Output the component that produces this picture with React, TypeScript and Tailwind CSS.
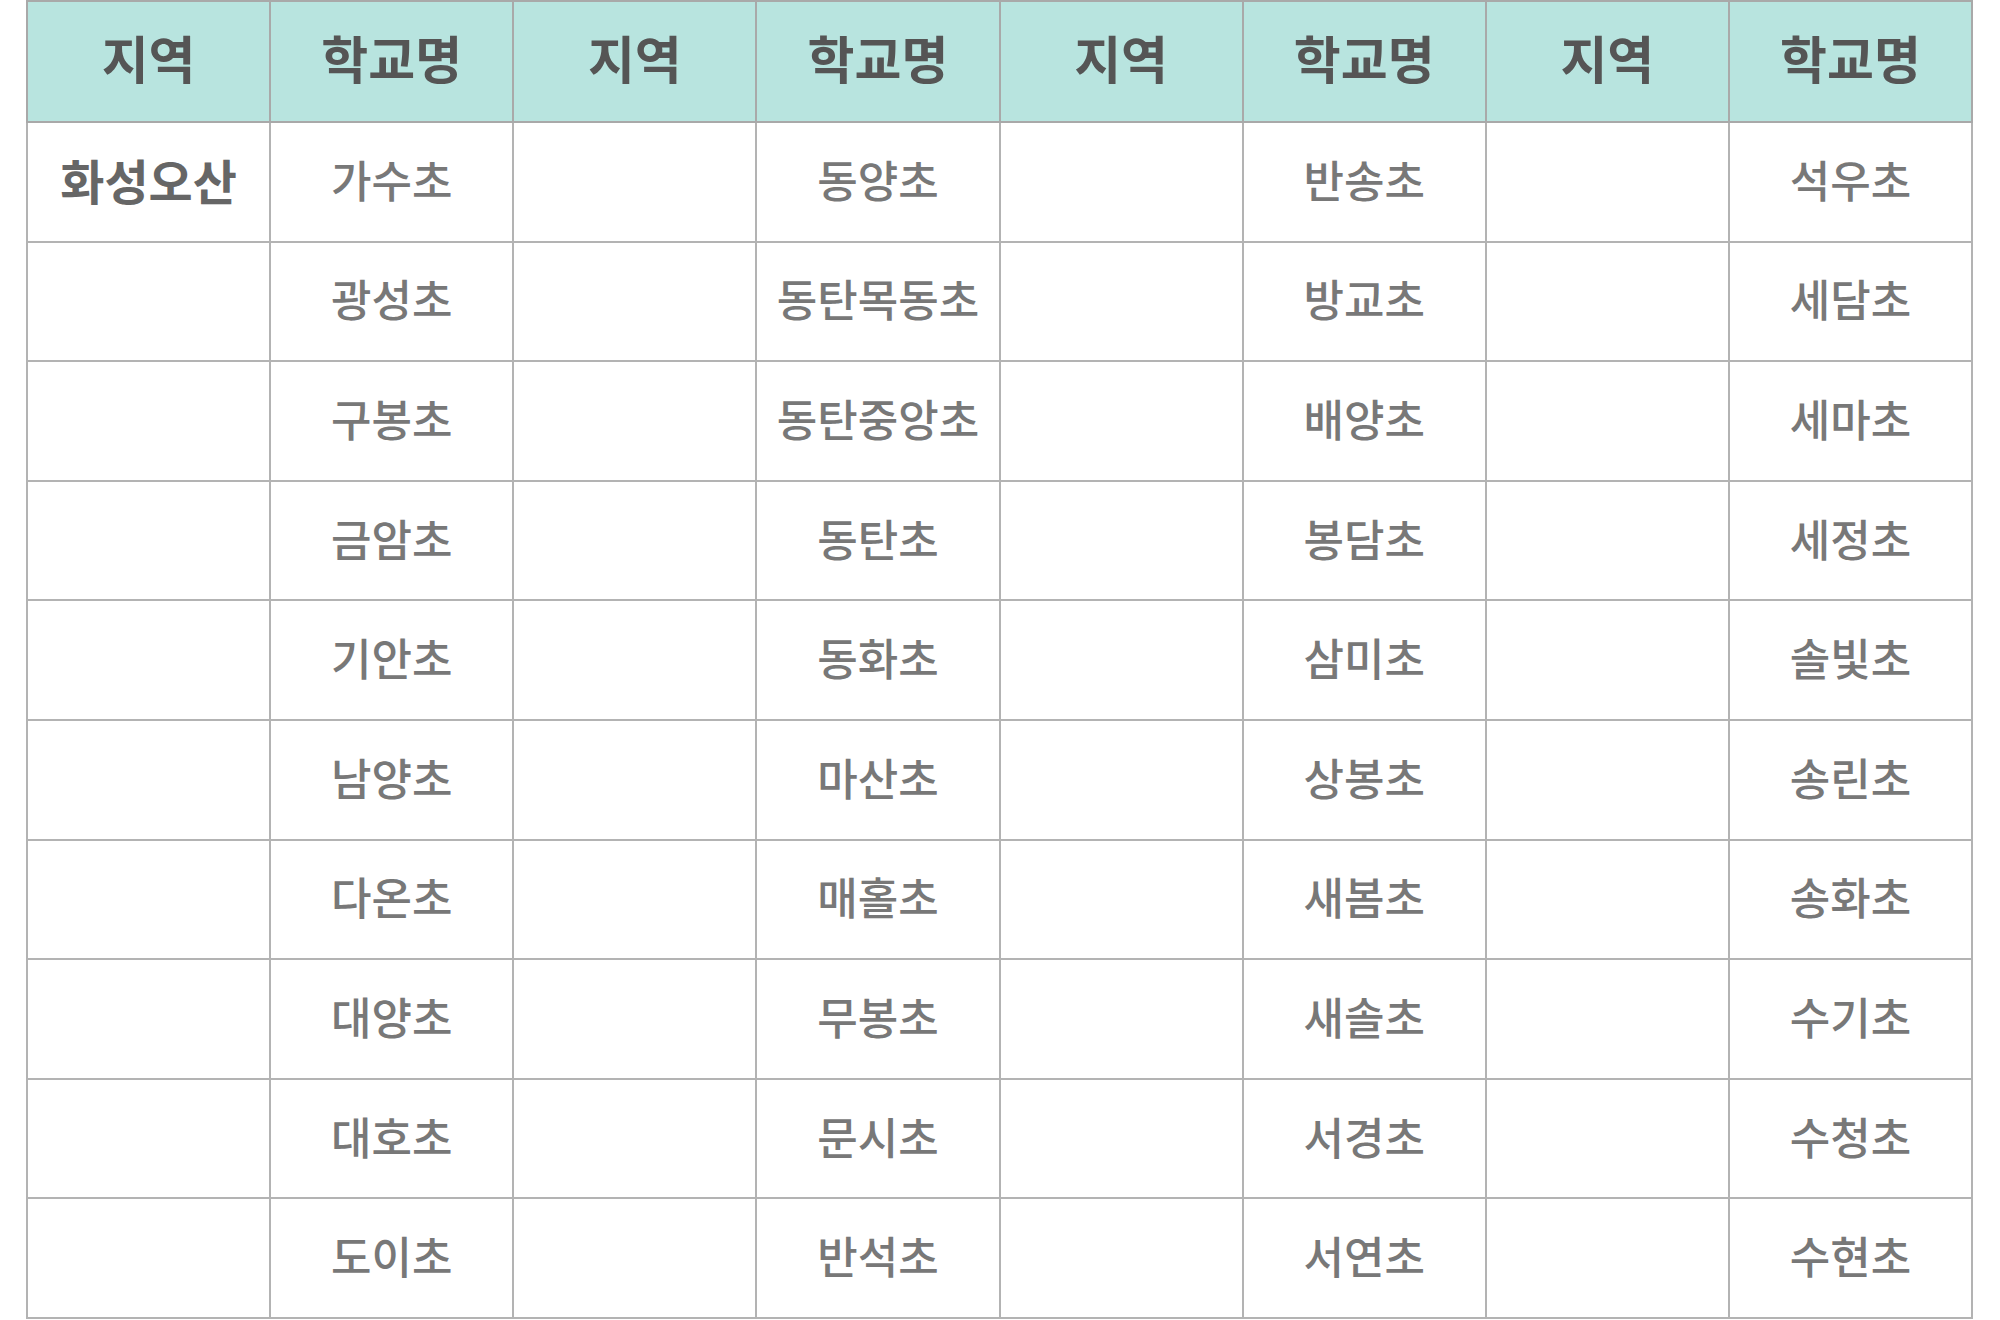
import React from "react";

const cols: string[][] = [
  ["가수초", "광성초", "구봉초", "금암초", "기안초", "남양초", "다온초", "대양초", "대호초", "도이초"],
  ["동양초", "동탄목동초", "동탄중앙초", "동탄초", "동화초", "마산초", "매홀초", "무봉초", "문시초", "반석초"],
  ["반송초", "방교초", "배양초", "봉담초", "삼미초", "상봉초", "새봄초", "새솔초", "서경초", "서연초"],
  ["석우초", "세담초", "세마초", "세정초", "솔빛초", "송린초", "송화초", "수기초", "수청초", "수현초"],
];

export default function App() {
  const headers = ["지역", "학교명", "지역", "학교명", "지역", "학교명", "지역", "학교명"];
  return (
    <div
      className="w-[2000px] h-[1320px] bg-white pl-[26px]"
      style={{ fontFamily: '"Noto Sans CJK KR", "Noto Sans", sans-serif' }}
    >
      <table className="border-collapse table-fixed w-[1947px]">
        <thead>
          <tr className="h-[121px] bg-[#b8e4df]">
            {headers.map((h, i) => (
              <th
                key={i}
                className="border-2 border-[#a9a9a9] text-[51px] leading-none font-bold text-[#555555] text-center align-middle p-0 pb-[8px]"
              >
                {h}
              </th>
            ))}
          </tr>
        </thead>
        <tbody>
          {Array.from({ length: 10 }).map((_, r) => (
            <tr key={r} className="h-[119.6px]">
              <td className="border-2 border-[#b3b3b3] text-center align-middle p-0 pb-[6px] leading-none text-[48px] font-bold text-[#666666]">
                {r === 0 ? "화성오산" : ""}
              </td>
              {cols.map((c, ci) => (
                <React.Fragment key={ci}>
                  <td className="border-2 border-[#b3b3b3] text-center align-middle p-0 pb-[6px] leading-none text-[44px] font-medium text-[#787878]">
                    {c[r]}
                  </td>
                  {ci < 3 && <td className="border-2 border-[#b3b3b3] p-0"></td>}
                </React.Fragment>
              ))}
            </tr>
          ))}
        </tbody>
      </table>
    </div>
  );
}
